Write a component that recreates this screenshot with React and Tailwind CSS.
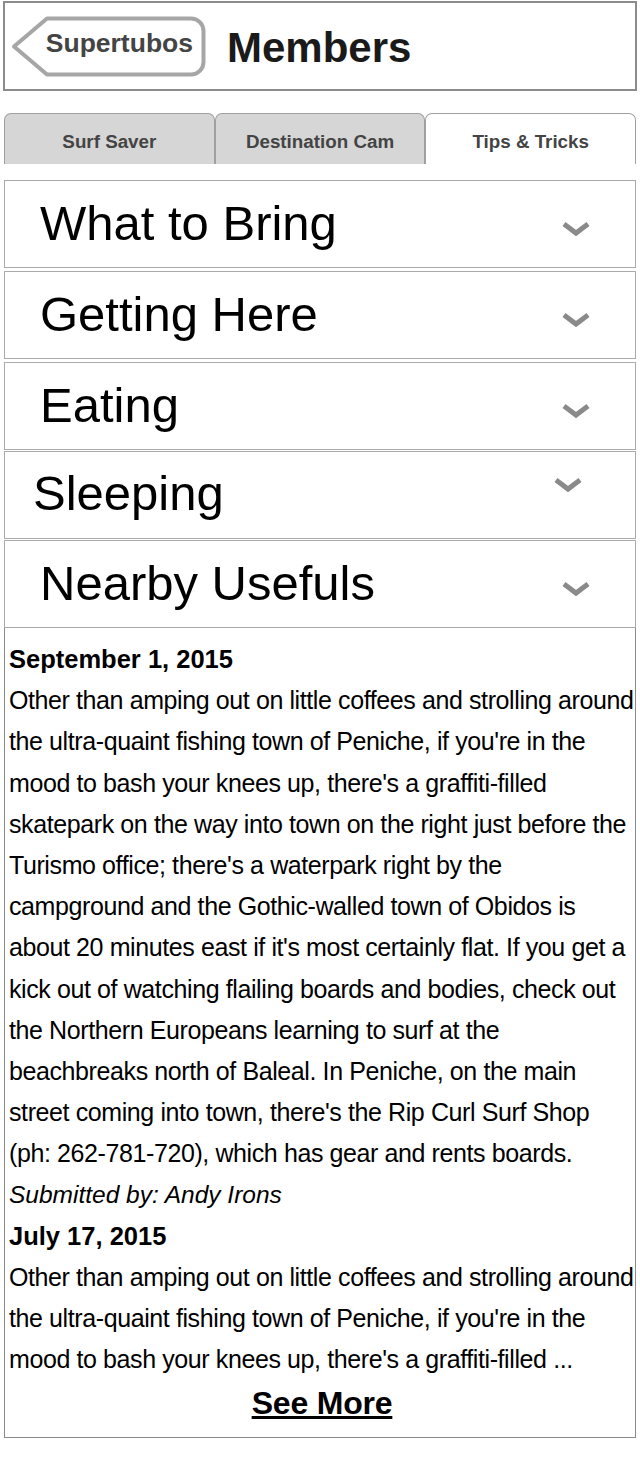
import React from "react";

const tabs = [
  { label: "Surf Saver", active: false },
  { label: "Destination Cam", active: false },
  { label: "Tips & Tricks", active: true },
];

const sections = [
  { title: "What to Bring", mt: "mt-0" },
  { title: "Getting Here", mt: "mt-[3px]" },
  { title: "Eating", mt: "mt-[3px]" },
  { title: "Sleeping", mt: "mt-[1px]" },
  { title: "Nearby Usefuls", mt: "mt-[1px]" },
];

const firstPost = [
  "Other than amping out on little coffees and strolling around",
  "the ultra-quaint fishing town of Peniche, if you're in the",
  "mood to bash your knees up, there's a graffiti-filled",
  "skatepark on the way into town on the right just before the",
  "Turismo office; there's a waterpark right by the",
  "campground and the Gothic-walled town of Obidos is",
  "about 20 minutes east if it's most certainly flat. If you get a",
  "kick out of watching flailing boards and bodies, check out",
  "the Northern Europeans learning to surf at the",
  "beachbreaks north of Baleal. In Peniche, on the main",
  "street coming into town, there's the Rip Curl Surf Shop",
  "(ph: 262-781-720), which has gear and rents boards.",
];

const secondPost = [
  "Other than amping out on little coffees and strolling around",
  "the ultra-quaint fishing town of Peniche, if you're in the",
  "mood to bash your knees up, there's a graffiti-filled ...",
];

function Chevron({ className }) {
  return (
    <svg width="30" height="16" viewBox="0 0 30 16" className={className}>
      <path d="M3 3l12 9 12-9" fill="none" stroke="#8a8a8a" strokeWidth="5" />
    </svg>
  );
}

function BackButton() {
  return (
    <div className="relative w-[195px] h-[61px] flex items-center justify-end pr-[13px]">
      <svg width="195" height="61" viewBox="0 0 195 61" className="absolute left-0 top-0">
        <path
          d="M36 2.5H180a12.5 12.5 0 0 1 12.5 12.5V46a12.5 12.5 0 0 1-12.5 12.5H36L3 30.5z"
          fill="#fff"
          stroke="#a6a6a6"
          strokeWidth="4"
          strokeLinejoin="round"
        />
      </svg>
      <span className="relative text-[26.5px] font-bold text-[#444] -mt-[4px]">Supertubos</span>
    </div>
  );
}

function Line({ children, className = "" }) {
  return <div className={"whitespace-nowrap h-[41.2px] leading-[41.2px] " + className}>{children}</div>;
}

export default function App() {
  return (
    <div className="w-[640px] min-h-[1477px] bg-white font-['Liberation_Sans',Arial,sans-serif] text-black">
      <div className="mx-[3px] mt-[1px] h-[90px] border-2 border-[#8c8c8c] flex items-center pl-[6px] gap-[21px]">
        <BackButton />
        <h1 className="text-[42px] font-bold text-[#1a1a1a] mt-[3px]">Members</h1>
      </div>

      <div className="mt-[22px] mx-[4px] flex h-[51px]">
        {tabs.map((t) => (
          <div
            key={t.label}
            className={
              "flex-1 flex items-center justify-center pt-[6px] rounded-t-[7px] border border-b-0 border-[#a0a0a0] text-[18.8px] font-bold text-[#444] " +
              (t.active ? "bg-white" : "bg-[#d6d6d6]")
            }
          >
            {t.label}
          </div>
        ))}
      </div>

      <div className="mt-[16px] mx-[4px] flex flex-col">
        {sections.map((s, i) => (
          <div
            key={s.title}
            className={
              "h-[88px] border border-[#aaaaaa] flex items-center justify-between " +
              s.mt +
              " " +
              (i === 3 ? "pl-[28px] pr-[52px]" : "pl-[35px] pr-[44px]")
            }
          >
            <span className={"text-[49px] text-black " + (i === 3 ? "-mt-[2px]" : "")}>{s.title}</span>
            <Chevron className={i === 3 ? "-mt-[20px]" : "mt-[10px]"} />
          </div>
        ))}
      </div>

      <div className="mx-[4px] -mt-[1px] border border-[#8a8a8a] h-[811px] pl-[4px] pt-[11px] text-[25px] tracking-[-0.4px]">
        <Line className="font-bold text-[25.5px] tracking-normal">September 1, 2015</Line>
        {firstPost.map((l, i) => (
          <Line key={"a" + i}>{l}</Line>
        ))}
        <Line className="italic text-[24.5px] tracking-normal">Submitted by: Andy Irons</Line>
        <Line className="font-bold text-[25.5px] tracking-normal">July 17, 2015</Line>
        {secondPost.map((l, i) => (
          <Line key={"b" + i}>{l}</Line>
        ))}
        <div className="text-center mt-[2px]">
          <a href="#" className="text-[32px] font-bold underline tracking-[-0.2px] leading-[42px]">
            See More
          </a>
        </div>
      </div>
    </div>
  );
}
